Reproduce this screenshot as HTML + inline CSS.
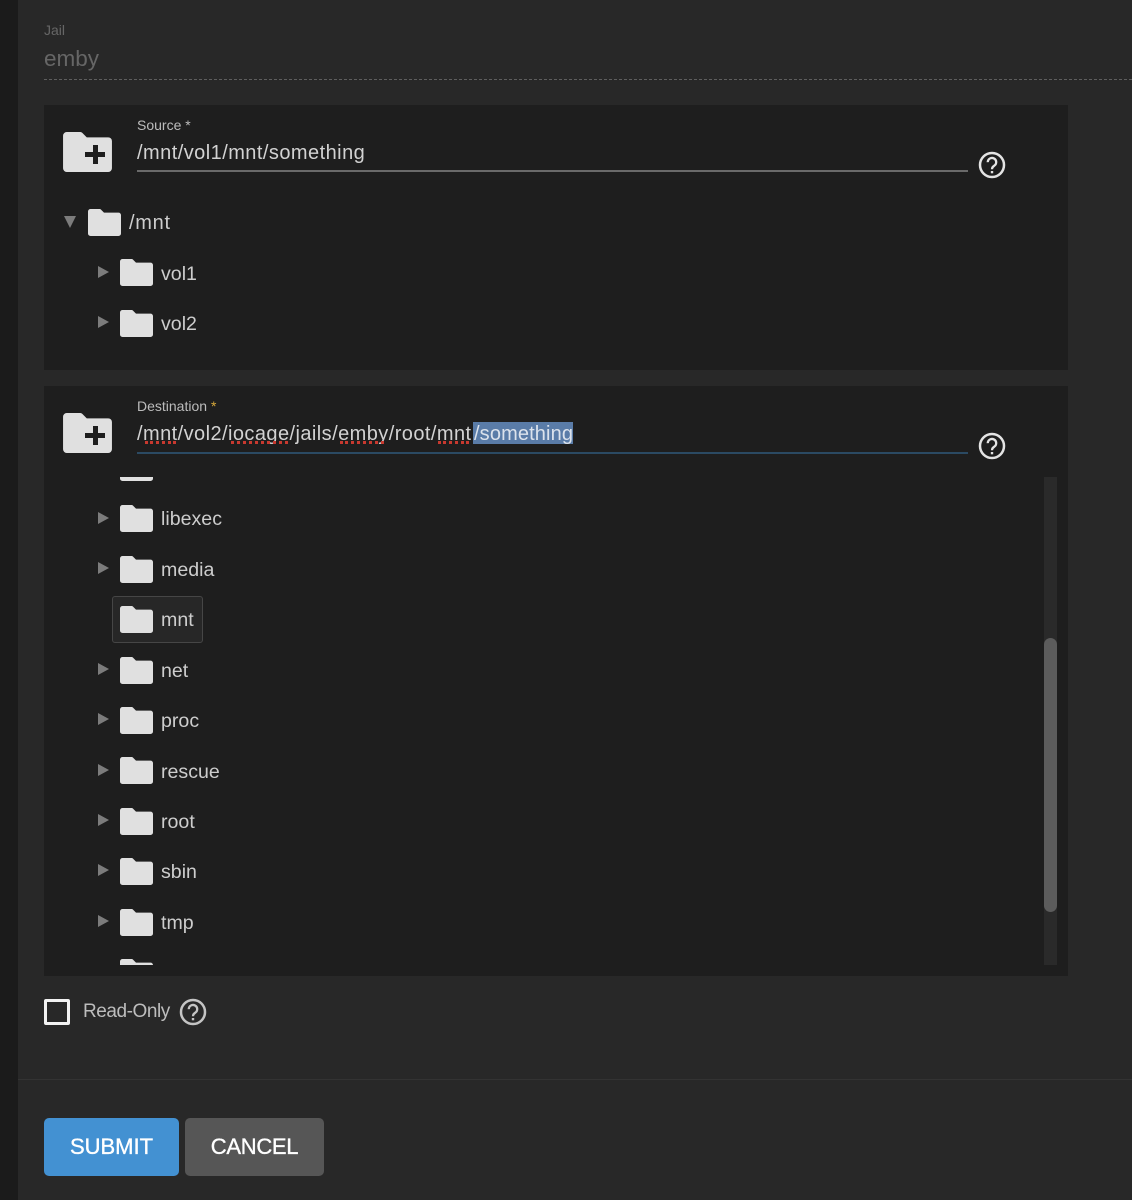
<!DOCTYPE html>
<html><head><meta charset="utf-8"><title>Mount point</title>
<style>
html,body{margin:0;padding:0;background:#282828}
body{width:1132px;height:1200px;position:relative;overflow:hidden;font-family:"Liberation Sans",sans-serif;color:#cfcfcf}
#w{position:absolute;left:0;top:0;width:1132px;height:1200px;filter:blur(.35px)}
.a{position:absolute}
.t{position:absolute;white-space:nowrap;line-height:24px;font-size:19.600px;color:#cdcdcd}
.f{position:absolute;width:33px;height:27px;fill:#e0e0e0}
.h{position:absolute;width:28px;height:28px;fill:none;stroke:#e4e4e4}
.tri{position:absolute;width:0;height:0;border-left:11px solid #7c7c7c;border-top:6.5px solid transparent;border-bottom:6.5px solid transparent}
.d{position:absolute;height:0;border-top:3px dotted #c8392f}
</style></head>
<body>
<svg width="0" height="0" style="position:absolute"><defs>
<symbol id="fo" viewBox="0 0 33 27"><path d="M2.500 0H11.500a2 2 0 0 1 1.500.6L16 3.600H30.500a2.500 2.500 0 0 1 2.500 2.500V24.500a2.500 2.500 0 0 1-2.500 2.500H2.500A2.500 2.500 0 0 1 0 24.500V2.500A2.500 2.500 0 0 1 2.500 0z"/></symbol>
<symbol id="he" viewBox="0 0 28 28"><circle cx="14" cy="14" r="12" stroke-width="2.500"/><path d="M9.800 11.200a4.200 4.200 0 1 1 6.600 3.400c-1.500 1.100-2.400 1.800-2.400 3.600" stroke-width="2.300"/><path d="M12.800 20h2.400v2.300h-2.400z" stroke="none" style="fill:currentColor"/></symbol>
</defs></svg>
<div id="w">

<div class="a" style="left:0;top:0;width:18px;height:1200px;background:#1b1b1b"></div>

<div class="t" style="left:44px;top:18px;font-size:14px;color:#666">Jail</div>
<div class="t" style="left:44px;top:47px;font-size:22.500px;color:#666">emby</div>
<div class="a" style="left:44px;top:79px;width:1088px;border-top:1px dashed #5e5e5e"></div>

<div class="a" style="left:44px;top:105px;width:1024px;height:265px;background:#1e1e1e"></div>
<div class="a" style="left:44px;top:386px;width:1024px;height:590px;background:#1e1e1e"></div>

<svg class="f" style="left:63px;top:132px;width:49px;height:40px"><use href="#fo" width="49" height="40"/></svg>
<div class="a" style="left:85px;top:152px;width:20px;height:5px;background:#1e1e1e"></div>
<div class="a" style="left:92.500px;top:145px;width:5px;height:19px;background:#1e1e1e"></div>
<div class="t" style="left:137px;top:113px;font-size:14px;color:#bcbcbc">Source *</div>
<div class="t" style="left:137px;top:141px;font-size:20px;letter-spacing:.45px;color:#d2d2d2">/mnt/vol1/mnt/something</div>
<div class="a" style="left:137px;top:170px;width:831px;height:1.500px;background:#6a6a6a"></div>
<svg class="h" style="left:978px;top:151px;color:#e4e4e4"><use href="#he" width="28" height="28"/></svg>

<div class="a" style="left:64px;top:216px;width:0;height:0;border-top:12px solid #7c7c7c;border-left:6.500px solid transparent;border-right:6.500px solid transparent"></div>
<svg class="f" style="left:88px;top:209px"><use href="#fo" width="33" height="27"/></svg>
<div class="t" style="left:129px;top:211px;font-size:20px;letter-spacing:.7px">/mnt</div>

<div class="tri" style="left:98px;top:266px"></div>
<svg class="f" style="left:120px;top:259px"><use href="#fo" width="33" height="27"/></svg>
<div class="t" style="left:161px;top:262px">vol1</div>
<div class="tri" style="left:98px;top:316px"></div>
<svg class="f" style="left:120px;top:309.500px"><use href="#fo" width="33" height="27"/></svg>
<div class="t" style="left:161px;top:312px">vol2</div>

<svg class="f" style="left:63px;top:413px;width:49px;height:40px"><use href="#fo" width="49" height="40"/></svg>
<div class="a" style="left:85px;top:433px;width:20px;height:5px;background:#1e1e1e"></div>
<div class="a" style="left:92.500px;top:426px;width:5px;height:19px;background:#1e1e1e"></div>
<div class="t" style="left:137px;top:394px;font-size:14px;color:#bcbcbc">Destination <span style="color:#d8a93a">*</span></div>
<div class="a" style="left:473px;top:422px;width:100px;height:22px;background:#5a7ca8"></div>
<div class="t" style="left:137px;top:422px;font-size:20px;letter-spacing:.43px;color:#d2d2d2">/mnt/vol2/iocage/jails/emby/root/mnt</div>
<div class="t" style="left:474px;top:422px;font-size:20px;letter-spacing:.13px;color:#dbe2ec">/something</div>
<div class="d" style="left:145px;top:441px;width:31px"></div>
<div class="d" style="left:231px;top:441px;width:57px"></div>
<div class="d" style="left:340px;top:441px;width:44px"></div>
<div class="d" style="left:438px;top:441px;width:31px"></div>
<div class="a" style="left:137px;top:451.500px;width:831px;height:2.500px;background:#2b4a63"></div>
<svg class="h" style="left:978px;top:432px;color:#e4e4e4"><use href="#he" width="28" height="28"/></svg>

<div class="a" style="left:44px;top:477px;width:1024px;height:488px;overflow:hidden">
  <svg class="f" style="left:76px;top:-23px"><use href="#fo" width="33" height="27"/></svg>
  <div class="tri" style="left:54px;top:34.500px"></div>
  <svg class="f" style="left:76px;top:28px"><use href="#fo" width="33" height="27"/></svg>
  <div class="t" style="left:117px;top:30px">libexec</div>
  <div class="tri" style="left:54px;top:85px"></div>
  <svg class="f" style="left:76px;top:78.500px"><use href="#fo" width="33" height="27"/></svg>
  <div class="t" style="left:117px;top:81px">media</div>
  <div class="a" style="left:68px;top:119px;width:89px;height:45px;background:#272727;border:1px solid #464646;border-radius:3px"></div>
  <svg class="f" style="left:76px;top:129px"><use href="#fo" width="33" height="27"/></svg>
  <div class="t" style="left:117px;top:131px">mnt</div>
  <div class="tri" style="left:54px;top:186px"></div>
  <svg class="f" style="left:76px;top:179.500px"><use href="#fo" width="33" height="27"/></svg>
  <div class="t" style="left:117px;top:182px">net</div>
  <div class="tri" style="left:54px;top:236px"></div>
  <svg class="f" style="left:76px;top:230px"><use href="#fo" width="33" height="27"/></svg>
  <div class="t" style="left:117px;top:232px">proc</div>
  <div class="tri" style="left:54px;top:287px"></div>
  <svg class="f" style="left:76px;top:280px"><use href="#fo" width="33" height="27"/></svg>
  <div class="t" style="left:117px;top:283px">rescue</div>
  <div class="tri" style="left:54px;top:337px"></div>
  <svg class="f" style="left:76px;top:330.500px"><use href="#fo" width="33" height="27"/></svg>
  <div class="t" style="left:117px;top:333px">root</div>
  <div class="tri" style="left:54px;top:387px"></div>
  <svg class="f" style="left:76px;top:381px"><use href="#fo" width="33" height="27"/></svg>
  <div class="t" style="left:117px;top:383px">sbin</div>
  <div class="tri" style="left:54px;top:438px"></div>
  <svg class="f" style="left:76px;top:431.500px"><use href="#fo" width="33" height="27"/></svg>
  <div class="t" style="left:117px;top:434px">tmp</div>
  <svg class="f" style="left:76px;top:482px"><use href="#fo" width="33" height="27"/></svg>
</div>

<div class="a" style="left:1044px;top:477px;width:13px;height:488px;background:#2a2a2a"></div>
<div class="a" style="left:1044px;top:638px;width:13px;height:274px;background:#5c5c5c;border-radius:6.500px"></div>

<div class="a" style="left:44px;top:999px;width:20px;height:20px;border:3px solid #f2f2f2;border-radius:2px"></div>
<div class="t" style="left:83px;top:1000px;font-size:19px;letter-spacing:-.45px;color:#bdbdbd">Read-Only</div>
<svg class="h" style="left:179px;top:998px;stroke:#c4c4c4;color:#c4c4c4"><use href="#he" width="28" height="28"/></svg>

<div class="a" style="left:18px;top:1079px;width:1114px;height:1px;background:#333"></div>

<div class="a" style="left:44px;top:1118px;width:135px;height:58px;background:#4391d2;border-radius:5px;color:#fff;font-size:22px;line-height:58px;text-align:center;-webkit-text-stroke:.35px #fff">SUBMIT</div>
<div class="a" style="left:185px;top:1118px;width:139px;height:58px;background:#565656;border-radius:5px;color:#fff;font-size:22px;letter-spacing:-.3px;line-height:58px;text-align:center;-webkit-text-stroke:.35px #fff">CANCEL</div>
</div>
</body></html>
